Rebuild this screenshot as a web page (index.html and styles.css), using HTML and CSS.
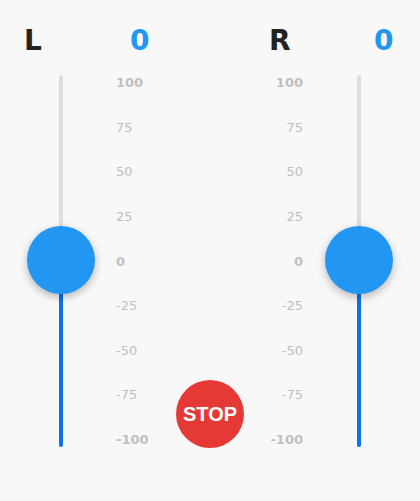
FILE: index.html
```html
<!DOCTYPE html>
<html>
<head>
<meta charset="utf-8">
<link rel="stylesheet" href="styles.css">
</head>
<body>
<div class="app">
  <div class="header">
    <span class="side">L</span>
    <span class="value">0</span>
    <span class="side">R</span>
    <span class="value">0</span>
  </div>
  <div class="main">
    <div class="slider">
      <div class="track"><div class="fill"></div></div>
      <div class="knob"></div>
    </div>
    <div class="scale scale-left">
      <span class="major">100</span><span>75</span><span>50</span><span>25</span><span class="major">0</span><span>-25</span><span>-50</span><span>-75</span><span class="major">-100</span>
    </div>
    <div class="center">
      <button class="stop">STOP</button>
    </div>
    <div class="scale scale-right">
      <span class="major">100</span><span>75</span><span>50</span><span>25</span><span class="major">0</span><span>-25</span><span>-50</span><span>-75</span><span class="major">-100</span>
    </div>
    <div class="slider">
      <div class="track"><div class="fill"></div></div>
      <div class="knob"></div>
    </div>
  </div>
</div>
</body>
</html>
```

FILE: styles.css
```css
html, body {
  margin: 0;
  padding: 0;
  background: #f8f8f8;
}
.app {
  width: 420px;
  height: 501px;
  font-family: "DejaVu Sans", Verdana, sans-serif;
}
.header {
  display: grid;
  grid-template-columns: 106px 139px 105px auto;
  padding: 25px 0 0 24px;
  height: 32px;
  font-size: 28px;
  line-height: 32px;
  font-weight: bold;
}
.side {
  color: #222;
}
.value {
  color: #2196f3;
}
.main {
  display: grid;
  grid-template-columns: 68px 61px 108px 61px 68px;
  padding: 0 27px;
  margin-top: 18px;
  height: 372px;
}
.slider {
  position: relative;
  display: flex;
  justify-content: center;
}
.track {
  width: 4px;
  height: 100%;
  background: #dedede;
  border-radius: 2px;
  display: flex;
  flex-direction: column;
  justify-content: flex-end;
  overflow: hidden;
}
.fill {
  height: 50%;
  background: #0b72f2;
}
.knob {
  position: absolute;
  left: 0;
  top: 151px;
  width: 68px;
  height: 68px;
  border-radius: 50%;
  background: #2196f3;
  box-shadow: 0 3px 8px rgba(0, 0, 0, 0.28);
}
.scale {
  display: flex;
  flex-direction: column;
  justify-content: space-between;
  font-size: 13px;
  line-height: 15px;
  color: #c0c0c0;
}
.scale-left {
  padding-left: 21px;
  align-items: flex-start;
}
.scale-right {
  padding-right: 22px;
  align-items: flex-end;
}
.major {
  font-weight: bold;
}
.center {
  display: flex;
  justify-content: center;
  align-items: flex-end;
}
.stop {
  width: 68px;
  height: 68px;
  border: none;
  border-radius: 50%;
  background: #e53935;
  color: #fff;
  font-family: "Liberation Sans", Arial, sans-serif;
  font-weight: bold;
  font-size: 20px;
  padding: 0;
  margin-bottom: -1px;
}
```
